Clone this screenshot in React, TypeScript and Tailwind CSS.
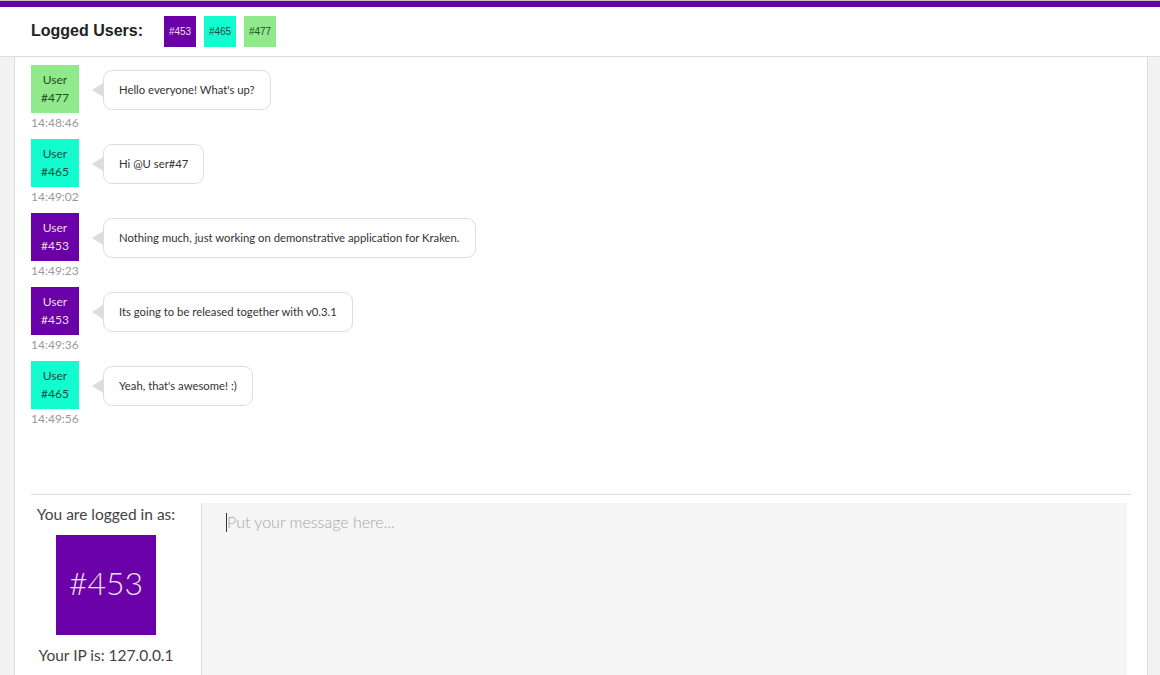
import React from "react";

type User = { id: string; bg: string; fg: string };

const users: Record<string, User> = {
  "453": { id: "#453", bg: "bg-[#6a00a8]", fg: "text-[#eedfe4]" },
  "465": { id: "#465", bg: "bg-[#12fccf]", fg: "text-[#1c4a3e]" },
  "477": { id: "#477", bg: "bg-[#90ea8c]", fg: "text-[#264a24]" },
};

const messages = [
  { user: "477", time: "14:48:46", text: "Hello everyone! What's up?" },
  { user: "465", time: "14:49:02", text: "Hi @U ser#47" },
  { user: "453", time: "14:49:23", text: "Nothing much, just working on demonstrative application for Kraken." },
  { user: "453", time: "14:49:36", text: "Its going to be released together with v0.3.1" },
  { user: "465", time: "14:49:56", text: "Yeah, that's awesome! :)" },
];

function Message({ user, time, text }: { user: string; time: string; text: string }) {
  const u = users[user];
  return (
    <div className="flex items-start mb-[7px]">
      <div className="w-12 flex flex-col">
        <div className={`w-12 h-12 ${u.bg} ${u.fg} flex flex-col items-center justify-center text-[12px] leading-[18px]`}>
          <span>User</span>
          <span>{u.id}</span>
        </div>
        <div className="text-[12px] leading-[18px] text-[#999] pt-[1px]">{time}</div>
      </div>
      <div className="relative ml-6 mt-[5px] h-10 flex items-center px-[15px] border border-[#dddddd] rounded-[9px] bg-white text-[11.3px] text-[#333]">
        <span className="absolute left-[-12px] top-[12px] w-0 h-0 border-y-[7px] border-y-transparent border-r-[11px] border-r-[#dddddd]" />
        {text}
      </div>
    </div>
  );
}

export default function App() {
  return (
    <div className="h-[675px] overflow-hidden flex flex-col bg-[#f2f2f2]" style={{ fontFamily: "Lato, 'Noto Sans', sans-serif" }}>
      <div className="h-px bg-[#c4c4c4]" />
      <div className="h-[6px] bg-[#6a00a8]" />
      <header className="h-[50px] bg-white border-b border-[#dddddd] flex items-center pl-[31px]" style={{ fontFamily: "'Liberation Sans', Arial, sans-serif" }}>
        <h1 className="text-[16px] font-bold text-[#222] mr-[21px] -mt-[2px]">Logged Users:</h1>
        <div className="flex gap-2">
          {["453", "465", "477"].map((k) => (
            <div key={k} className={`w-8 h-[31px] ${users[k].bg} ${users[k].fg} flex items-center justify-center text-[10px]`}>
              {users[k].id}
            </div>
          ))}
        </div>
      </header>
      <div className="flex-1 flex pl-[14px] pr-[12px] min-h-0">
        <main className="flex-1 bg-white border-x border-[#dddddd] flex flex-col min-h-0">
          <section className="h-[437px] pt-2 px-4">
            {messages.map((m, i) => (
              <Message key={i} {...m} />
            ))}
          </section>
          <div className="mx-4 border-t border-[#dddddd]" />
          <section className="flex-1 flex pt-2 pl-4 pr-5 min-h-0">
            <div className="w-[150px] flex flex-col items-center text-[15.5px] text-[#444] mr-5">
              <div className="pt-[1px] leading-[20px]">You are logged in as:</div>
              <div className="mt-[11px] w-[100px] h-[100px] bg-[#6a00a8] text-[#f0e4d8] flex items-center justify-center text-[32px] font-light pb-[4px]">
                #453
              </div>
              <div className="mt-[10px] leading-[20px]">Your IP is: 127.0.0.1</div>
            </div>
            <div className="relative flex-1 border-l border-[#dddddd] bg-[#f5f5f5]">
              <span className="absolute left-[24px] top-[10px] w-px h-[19px] bg-[#333]" />
              <textarea
                placeholder="Put your message here..."
                className="w-full h-full resize-none bg-transparent outline-none pl-[25px] pt-[7px] text-[16px] font-light text-[#333] placeholder:text-[#a6a6a6]"
              />
            </div>
          </section>
        </main>
      </div>
    </div>
  );
}
